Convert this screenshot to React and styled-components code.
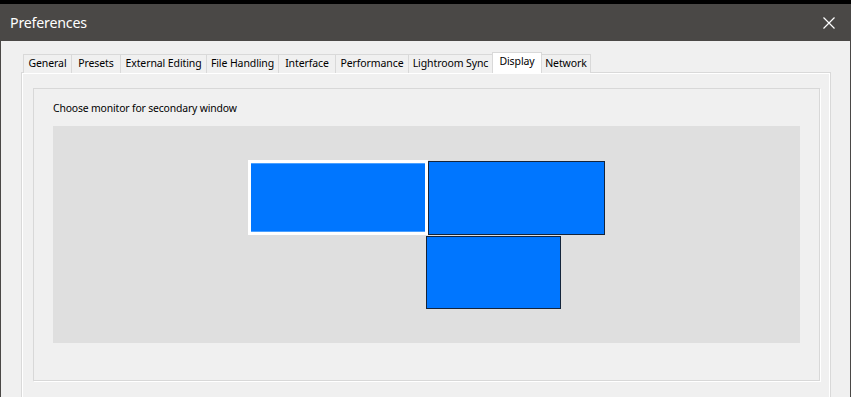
import React from "react";
import styled, { createGlobalStyle } from "styled-components";

const Global = createGlobalStyle`
  html, body { margin: 0; padding: 0; background: #f0f0f0; }
  body { font-family: "Noto Sans", "Open Sans", sans-serif; }
`;

const Window = styled.div`
  width: 851px;
  height: 397px;
  box-sizing: border-box;
  border-top: 4px solid #000;
  display: flex;
  flex-direction: column;
  overflow: hidden;
`;

const TitleBar = styled.div`
  height: 37px;
  flex: none;
  background: #4a4846;
  display: flex;
  align-items: center;
  justify-content: space-between;
  padding: 0 16px 0 10px;
`;

const Title = styled.div`
  color: #fff;
  font-family: "Noto Sans", sans-serif;
  font-size: 14.2px;
  letter-spacing: -0.2px;
`;

const Body = styled.div`
  flex: 1;
  background: #f0f0f0;
  border-left: 1px solid #4a4846;
  border-right: 1px solid #4a4846;
  padding: 11px 19px 0 20px;
  display: flex;
  flex-direction: column;
`;

const TabRow = styled.div`
  display: flex;
  align-items: flex-start;
  height: 21px;
  padding-left: 2px;
  position: relative;
  z-index: 1;
  margin-bottom: -1px;
`;

const Tab = styled.div`
  box-sizing: border-box;
  width: ${(p) => p.$w}px;
  height: ${(p) => (p.$active ? 21 : 19)}px;
  margin-top: ${(p) => (p.$active ? 0 : 2)}px;
  margin-left: -1px;
  border: 1px solid #d9d9d9;
  border-bottom: none;
  background: ${(p) => (p.$active ? "#fff" : "#f0f0f0")};
  color: #000;
  font-size: 10.5px;
  letter-spacing: -0.1px;
  line-height: 15px;
  display: flex;
  align-items: flex-start;
  padding-top: 1px;
  justify-content: center;
  white-space: nowrap;
  position: relative;
  z-index: ${(p) => (p.$active ? 2 : 1)};
  &:first-child { margin-left: 0; }
`;

const Panel = styled.div`
  flex: 1;
  border: 1px solid #d9d9d9;
  border-bottom: none;
  box-shadow: inset 1px 1px 0 #fff, inset -1px 0 0 #fff;
  padding: 15px 10px 0 11px;
`;

const GroupBox = styled.div`
  border: 1px solid #d8d8d8;
  box-shadow: 1px 1px 0 #fff;
  padding: 11px 19px 37px 19px;
`;

const Label = styled.div`
  font-size: 10.4px;
  line-height: 16px;
  letter-spacing: -0.15px;
  color: #000;
  margin-bottom: 10px;
`;

const Canvas = styled.div`
  position: relative;
  height: 217px;
  background: #dfdfdf;
`;

const Monitor = styled.div`
  position: absolute;
  box-sizing: border-box;
  background: #0076ff;
  border: ${(p) => (p.$selected ? "3px solid #fff" : "1px solid #14243a")};
  box-shadow: ${(p) =>
    p.$selected ? "inset 0 1px 0 #4aa0ff, inset 0 -1px 0 #4aa0ff" : "none"};
`;

const CloseIcon = () => (
  <svg width="12" height="12" viewBox="0 0 12 12">
    <path d="M0.5 0.5 L11.5 11.5 M11.5 0.5 L0.5 11.5" stroke="#fff" strokeWidth="1.2" fill="none" />
  </svg>
);

const tabs = [
  ["General", 49],
  ["Presets", 50],
  ["External Editing", 87],
  ["File Handling", 73],
  ["Interface", 58],
  ["Performance", 74],
  ["Lightroom Sync", 85],
  ["Display", 50],
  ["Network", 50],
];

const monitors = [
  { left: 195, top: 34, width: 180, height: 75, selected: true },
  { left: 375, top: 35, width: 177, height: 74 },
  { left: 373, top: 110, width: 135, height: 73 },
];

export default function App() {
  return (
    <>
      <Global />
      <Window>
        <TitleBar>
          <Title>Preferences</Title>
          <CloseIcon />
        </TitleBar>
        <Body>
          <TabRow>
            {tabs.map(([name, w]) => (
              <Tab key={name} $w={w} $active={name === "Display"}>
                {name}
              </Tab>
            ))}
          </TabRow>
          <Panel>
            <GroupBox>
              <Label>Choose monitor for secondary window</Label>
              <Canvas>
                {monitors.map((m, i) => (
                  <Monitor
                    key={i}
                    $selected={m.selected}
                    style={{ left: m.left, top: m.top, width: m.width, height: m.height }}
                  />
                ))}
              </Canvas>
            </GroupBox>
          </Panel>
        </Body>
      </Window>
    </>
  );
}
